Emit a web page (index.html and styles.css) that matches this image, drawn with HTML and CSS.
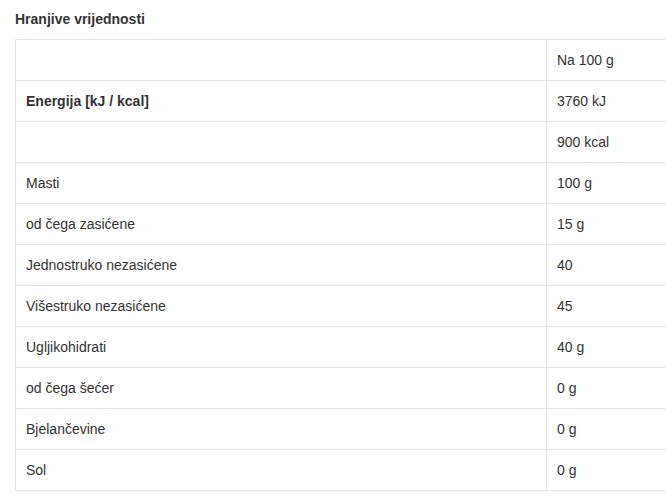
FILE: index.html
```html
<!DOCTYPE html>
<html>
<head>
<meta charset="utf-8">
<link rel="stylesheet" href="styles.css">
</head>
<body>
<div class="wrap">
  <h3 class="title">Hranjive vrijednosti</h3>
  <table class="nutri">
    <tr><td></td><td>Na 100 g</td></tr>
    <tr><td><strong>Energija [kJ / kcal]</strong></td><td>3760 kJ</td></tr>
    <tr><td></td><td>900 kcal</td></tr>
    <tr><td>Masti</td><td>100 g</td></tr>
    <tr><td>od čega zasićene</td><td>15 g</td></tr>
    <tr><td>Jednostruko nezasićene</td><td>40</td></tr>
    <tr><td>Višestruko nezasićene</td><td>45</td></tr>
    <tr><td>Ugljikohidrati</td><td>40 g</td></tr>
    <tr><td>od čega šećer</td><td>0 g</td></tr>
    <tr><td>Bjelančevine</td><td>0 g</td></tr>
    <tr><td>Sol</td><td>0 g</td></tr>
  </table>
</div>
</body>
</html>
```
FILE: styles.css
```css
html, body {
  margin: 0;
  padding: 0;
  background: #fff;
  overflow: hidden;
}
body {
  font-family: "Liberation Sans", Arial, sans-serif;
  color: #333;
  font-size: 14px;
}
.wrap {
  padding: 10px 0 0 15px;
}
.title {
  margin: 0 0 11px 0;
  font-size: 14px;
  font-weight: bold;
  line-height: 18px;
  color: #333;
}
.nutri {
  border-collapse: collapse;
  width: 680px;
}
.nutri td {
  border: 1px solid #e5e5e5;
  height: 41px;
  padding: 0 10px;
  box-sizing: border-box;
  font-size: 14px;
  line-height: 20px;
  vertical-align: middle;
}
.nutri td:first-child {
  width: 531px;
}
.nutri strong {
  font-weight: bold;
}
```
